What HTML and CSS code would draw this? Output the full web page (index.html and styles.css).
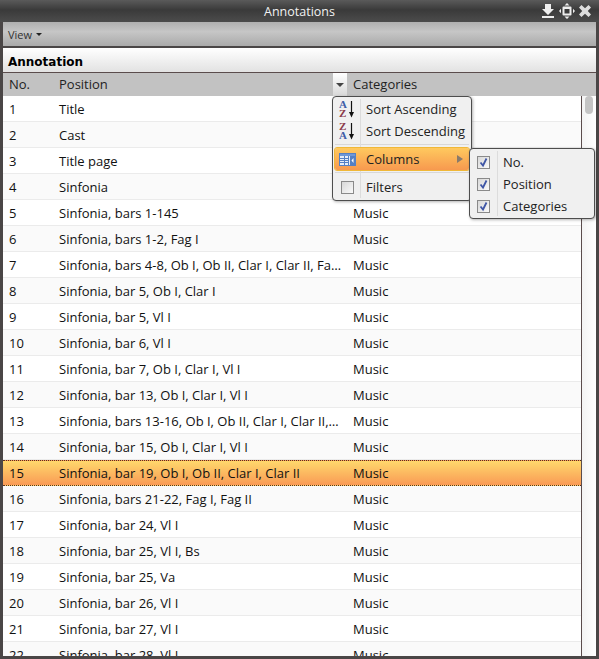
FILE: index.html
```html
<!DOCTYPE html>
<html lang="en">
<head>
  <meta charset="UTF-8">
  <title>Annotations</title>
  <link rel="stylesheet" href="styles.css">
</head>
<body>

<div class="window">
  <div class="titlebar">
    <span class="title">Annotations</span>
    <div class="tools">
      <svg width="14" height="16" viewBox="0 0 14 16"><path d="M4 1h6v5h3l-6 6-6-6h3z" fill="#eee"/><rect x="1" y="13" width="12" height="2" fill="#eee"/></svg>
      <svg width="16" height="16" viewBox="0 0 16 16"><path d="M8 0l2.500 2.500h-5zM8 16l-2.500-2.500h5zM0 8l2-2.200v4.400zM16 8l-2-2.200v4.400z" fill="#eee"/><path fill-rule="evenodd" d="M4.500 3.500h7a1 1 0 0 1 1 1v7a1 1 0 0 1-1 1h-7a1 1 0 0 1-1-1v-7a1 1 0 0 1 1-1zM5.500 6v4.500h5V6z" fill="#eee"/></svg>
      <svg width="12" height="12" viewBox="0 0 12 12"><path d="M0 2.500L2.500 0 6 3.200 9.500 0 12 2.500 8.800 6 12 9.500 9.500 12 6 8.800 2.500 12 0 9.500 3.200 6z" fill="#ddd"/></svg>
    </div>
  </div>

  <div class="toolbar">
    <span class="view">View</span><span class="caret"></span>
  </div>

  <div class="panel">
    <div class="caption">Annotation</div>
    <div class="colhead">
      <div class="cell c-no">No.</div>
      <div class="cell c-pos">Position</div>
      <div class="trigger"><span class="caret caret-grey"></span></div>
      <div class="cell c-cat">Categories</div>
    </div>
    <div class="body">
      <div class="rows">
        <div class="row"><div class="cell c-no">1</div><div class="cell c-pos">Title</div></div>
        <div class="row"><div class="cell c-no">2</div><div class="cell c-pos">Cast</div></div>
        <div class="row"><div class="cell c-no">3</div><div class="cell c-pos">Title page</div></div>
        <div class="row"><div class="cell c-no">4</div><div class="cell c-pos">Sinfonia</div></div>
        <div class="row"><div class="cell c-no">5</div><div class="cell c-pos">Sinfonia, bars 1-145</div><div class="cell c-cat">Music</div></div>
        <div class="row"><div class="cell c-no">6</div><div class="cell c-pos">Sinfonia, bars 1-2, Fag I</div><div class="cell c-cat">Music</div></div>
        <div class="row"><div class="cell c-no">7</div><div class="cell c-pos">Sinfonia, bars 4-8, Ob I, Ob II, Clar I, Clar II, Fag I, Fag II</div><div class="cell c-cat">Music</div></div>
        <div class="row"><div class="cell c-no">8</div><div class="cell c-pos">Sinfonia, bar 5, Ob I, Clar I</div><div class="cell c-cat">Music</div></div>
        <div class="row"><div class="cell c-no">9</div><div class="cell c-pos">Sinfonia, bar 5, Vl I</div><div class="cell c-cat">Music</div></div>
        <div class="row"><div class="cell c-no">10</div><div class="cell c-pos">Sinfonia, bar 6, Vl I</div><div class="cell c-cat">Music</div></div>
        <div class="row"><div class="cell c-no">11</div><div class="cell c-pos">Sinfonia, bar 7, Ob I, Clar I, Vl I</div><div class="cell c-cat">Music</div></div>
        <div class="row"><div class="cell c-no">12</div><div class="cell c-pos">Sinfonia, bar 13, Ob I, Clar I, Vl I</div><div class="cell c-cat">Music</div></div>
        <div class="row"><div class="cell c-no">13</div><div class="cell c-pos">Sinfonia, bars 13-16, Ob I, Ob II, Clar I, Clar II, Fag I</div><div class="cell c-cat">Music</div></div>
        <div class="row"><div class="cell c-no">14</div><div class="cell c-pos">Sinfonia, bar 15, Ob I, Clar I, Vl I</div><div class="cell c-cat">Music</div></div>
        <div class="row selected"><div class="cell c-no">15</div><div class="cell c-pos">Sinfonia, bar 19, Ob I, Ob II, Clar I, Clar II</div><div class="cell c-cat">Music</div></div>
        <div class="row"><div class="cell c-no">16</div><div class="cell c-pos">Sinfonia, bars 21-22, Fag I, Fag II</div><div class="cell c-cat">Music</div></div>
        <div class="row"><div class="cell c-no">17</div><div class="cell c-pos">Sinfonia, bar 24, Vl I</div><div class="cell c-cat">Music</div></div>
        <div class="row"><div class="cell c-no">18</div><div class="cell c-pos">Sinfonia, bar 25, Vl I, Bs</div><div class="cell c-cat">Music</div></div>
        <div class="row"><div class="cell c-no">19</div><div class="cell c-pos">Sinfonia, bar 25, Va</div><div class="cell c-cat">Music</div></div>
        <div class="row"><div class="cell c-no">20</div><div class="cell c-pos">Sinfonia, bar 26, Vl I</div><div class="cell c-cat">Music</div></div>
        <div class="row"><div class="cell c-no">21</div><div class="cell c-pos">Sinfonia, bar 27, Vl I</div><div class="cell c-cat">Music</div></div>
        <div class="row"><div class="cell c-no">22</div><div class="cell c-pos">Sinfonia, bar 28, Vl I</div><div class="cell c-cat">Music</div></div>
      </div>
      <div class="scrollbar"><div class="thumb"></div></div>
    </div>
  </div>

  <div class="menu menu-main">
    <div class="item">
      <span class="lead">
        <svg width="18" height="18" viewBox="0 0 18 18"><text x="1" y="8" class="az az-blue">A</text><text x="1" y="17" class="az az-red">Z</text><path d="M13.500 1v12" stroke="#111" stroke-width="1.200"/><path d="M11 12h5l-2.500 5.500z" fill="#111"/></svg>
      </span>
      <span>Sort Ascending</span>
    </div>
    <div class="item">
      <span class="lead">
        <svg width="18" height="18" viewBox="0 0 18 18"><text x="1" y="8" class="az az-red">Z</text><text x="1" y="17" class="az az-blue">A</text><path d="M13.500 1v12" stroke="#111" stroke-width="1.200"/><path d="M11 12h5l-2.500 5.500z" fill="#111"/></svg>
      </span>
      <span>Sort Descending</span>
    </div>
    <div class="sep"></div>
    <div class="item item-active">
      <span class="lead">
        <svg class="columns-ico" width="17" height="13" viewBox="0 0 17 13"><rect x="0.500" y="0.500" width="16" height="12" fill="#e6edf8" stroke="#5580c4"/><rect x="1" y="1" width="15" height="2" fill="#6f97d6"/><path d="M5.500 3v9M9.500 3v9M1 5.500h8M1 7.500h8M1 9.500h8" stroke="#5580c4"/><rect x="11" y="3" width="5" height="9" fill="#5580c4"/><path d="M14.500 5l-2 2.500 2 2.500z" fill="#fff"/></svg>
      </span>
      <span>Columns</span>
      <span class="arrow"></span>
    </div>
    <div class="sep"></div>
    <div class="item">
      <span class="lead lead-check"><span class="check"></span></span>
      <span>Filters</span>
    </div>
  </div>

  <div class="menu menu-sub">
    <div class="item">
      <span class="lead lead-check"><span class="check"><svg width="11" height="11" viewBox="0 0 11 11"><path d="M2.500 5.500l2.500 3L8.500 1.500" fill="none" stroke="#3f56a6" stroke-width="1.800"/></svg></span></span>
      <span>No.</span>
    </div>
    <div class="item">
      <span class="lead lead-check"><span class="check"><svg width="11" height="11" viewBox="0 0 11 11"><path d="M2.500 5.500l2.500 3L8.500 1.500" fill="none" stroke="#3f56a6" stroke-width="1.800"/></svg></span></span>
      <span>Position</span>
    </div>
    <div class="item">
      <span class="lead lead-check"><span class="check"><svg width="11" height="11" viewBox="0 0 11 11"><path d="M2.500 5.500l2.500 3L8.500 1.500" fill="none" stroke="#3f56a6" stroke-width="1.800"/></svg></span></span>
      <span>Categories</span>
    </div>
  </div>
</div>

</body>
</html>
```

FILE: styles.css
```css
html, body {
  margin: 0;
  height: 100%;
  overflow: hidden;
}

body {
  background: #4a4646;
  font-family: "Open Sans", sans-serif;
  font-size: 13px;
  color: #111;
}

.window {
  position: relative;
  width: 599px;
  height: 659px;
  box-sizing: border-box;
  padding: 0 3px 3px 3px;
  background: #4a4646;
  display: flex;
  flex-direction: column;
  overflow: hidden;
}

/* title bar */
.titlebar {
  height: 22px;
  flex: none;
  margin: 0 -3px;
  box-sizing: border-box;
  background: linear-gradient(#5a5a5a, #3a3a3a 45%, #4c4c4c);
  display: flex;
  align-items: center;
  justify-content: center;
  position: relative;
}

.title {
  color: #f2f2f2;
  font-size: 12.5px;
}

.tools {
  position: absolute;
  right: 8px;
  top: 3px;
  display: flex;
  align-items: center;
  gap: 4px;
}

/* toolbar */
.toolbar {
  height: 24px;
  flex: none;
  padding-left: 5px;
  background: linear-gradient(#b0b0b0, #c6c6c6 40%, #aaaaaa);
  display: flex;
  align-items: center;
  gap: 4px;
  font-size: 11px;
  color: #333;
}

.caret {
  width: 0;
  height: 0;
  margin-top: 1px;
  border-left: 3px solid transparent;
  border-right: 3px solid transparent;
  border-top: 3px solid #222;
}

.caret-grey {
  border-left-width: 4px;
  border-right-width: 4px;
  border-top: 4px solid #444;
}

/* grid */
.panel {
  flex: 1;
  min-height: 0;
  margin-top: 2px;
  background: #fff;
  display: flex;
  flex-direction: column;
  overflow: hidden;
}

.caption {
  height: 25px;
  flex: none;
  box-sizing: border-box;
  padding: 4px 0 0 5px;
  display: flex;
  align-items: center;
  font-family: "DejaVu Sans", sans-serif;
  font-size: 12px;
  font-weight: bold;
  color: #000;
  background: linear-gradient(#ffffff, #e2e2e2);
  border-bottom: 1px solid #5a4c4c;
}

.colhead {
  height: 23px;
  flex: none;
  box-sizing: border-box;
  padding-bottom: 2px;
  display: flex;
  align-items: center;
  background: #c2c2c2;
  color: #222;
}

.cell {
  box-sizing: border-box;
  padding-left: 6px;
  white-space: nowrap;
  overflow: hidden;
  text-overflow: ellipsis;
}

.c-no { width: 50px; flex: none; }
.c-pos { width: 294px; flex: none; padding-right: 5px; }
.c-cat { flex: 1; }

.colhead .c-pos { width: 280px; }

.trigger {
  width: 14px;
  height: 23px;
  margin-bottom: -2px;
  flex: none;
  display: flex;
  align-items: center;
  justify-content: center;
  background: linear-gradient(#fff, #d8d8d8);
}

.body {
  flex: 1;
  min-height: 0;
  display: flex;
}

.rows {
  flex: 1;
  min-width: 0;
  border-right: 1px solid #5a4c4c;
  overflow: hidden;
}

.row {
  height: 26px;
  box-sizing: border-box;
  display: flex;
  align-items: center;
  border-bottom: 1px solid #ebebeb;
}

.row:nth-child(even) {
  background: #fafafa;
}

.row.selected {
  background: linear-gradient(#ffd86c, #f99a55);
  border-top: 1px dotted #5a3020;
  border-bottom: 1px dotted #5a3020;
}

.scrollbar {
  width: 14px;
  flex: none;
  background: linear-gradient(90deg, #f3f3f3, #fff);
}

.thumb {
  width: 8px;
  height: 18px;
  margin: 0 0 0 3px;
  border-radius: 4px;
  background: #c4c4c4;
}

/* menus */
.menu {
  position: absolute;
  box-sizing: border-box;
  background: #f0f0f0;
  border: 1px solid #4d4d4d;
  border-radius: 4px;
  box-shadow: 1px 1px 3px rgba(0, 0, 0, 0.3);
  padding: 1px 2px;
}

.menu::before {
  content: "";
  position: absolute;
  top: 2px;
  bottom: 2px;
  left: 27px;
  width: 1px;
  background: #dcdcdc;
}

.menu-main {
  left: 332px;
  top: 96px;
  width: 140px;
  height: 105px;
}

.menu-sub {
  left: 469px;
  top: 148px;
  width: 126px;
  height: 71px;
  padding: 2px;
}

.item {
  position: relative;
  height: 22px;
  display: flex;
  align-items: center;
  color: #222;
}

.lead {
  width: 31px;
  flex: none;
  box-sizing: border-box;
  padding-left: 3px;
  display: flex;
  align-items: center;
}

.lead-check {
  padding-left: 5px;
}

.menu-main .lead-check {
  padding-left: 6px;
}

.columns-ico {
  margin-left: 1px;
}

.item-active {
  border-radius: 2px;
  background: linear-gradient(#ffc95e, #f7994f);
  outline: 1px solid #f0b838;
}

.arrow {
  position: absolute;
  right: 6px;
  top: 7px;
  width: 0;
  height: 0;
  border-top: 4px solid transparent;
  border-bottom: 4px solid transparent;
  border-left: 6px solid #8a7a6a;
}

.sep {
  height: 1px;
  margin: 2px 0 3px;
  background: #d8d8d8;
}

.check {
  width: 11px;
  height: 11px;
  border: 1px solid #8a8a8a;
  background: linear-gradient(135deg, #d8d8d8, #fafafa);
  display: block;
}

.check svg {
  display: block;
}

.az {
  font-family: "Liberation Serif", serif;
  font-size: 11px;
  font-weight: bold;
}

.az-blue { fill: #3f5ea8; }
.az-red { fill: #8a3a4a; }
```
